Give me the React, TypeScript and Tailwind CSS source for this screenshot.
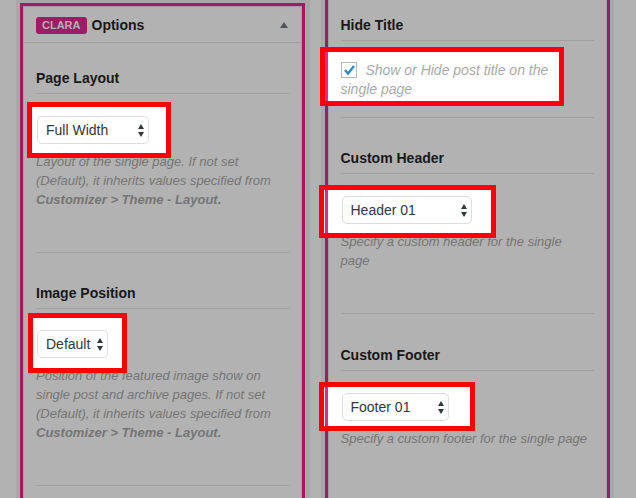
import type { ReactNode } from "react";

function Highlight({ box, strip }: { box: string; strip?: string }) {
  return (
    <span aria-hidden="true" className={`pointer-events-none absolute z-10 border-5 border-[#ff0000] bg-white ${box}`}>
      {strip && <span className={`absolute inset-y-0 bg-[#e62790] ${strip}`} />}
    </span>
  );
}

function Choice({ id, value, width }: { id: string; value: string; width: string }) {
  return (
    <div className={`relative z-20 ml-px h-7 ${width}`}>
      <select
        id={id}
        defaultValue={value}
        className="block h-7 w-full appearance-none rounded-[5px] border border-[#dddddd] bg-white pl-2 text-[14px] leading-[18px] text-[#32373c]"
      >
        <option>{value}</option>
      </select>
      <svg viewBox="0 0 6 13" className="pointer-events-none absolute top-2 right-[5px] h-[13px] w-[6px]" fill="#32373c">
        <path d="M0 5 3 0l3 5zM0 8h6l-3 5z" />
      </svg>
    </div>
  );
}

function Heading({ id, children }: { id?: string; children: ReactNode }) {
  return (
    <h3 className="border-b border-[#a0a0a0] pb-1.5 text-[14px] leading-[18px] font-bold text-[#181818]">
      {id ? <label htmlFor={id}>{children}</label> : children}
    </h3>
  );
}

function Help({ children }: { children: ReactNode }) {
  return <p className="text-[13px] leading-[19px] text-[#757575] italic">{children}</p>;
}

export default function App() {
  return (
    <main className="grid h-screen grid-cols-2 gap-[11px] overflow-hidden bg-[#b2b2b2] pr-[22px] pl-4 font-['Liberation_Sans',Arial,sans-serif]">
      <div className="min-w-0 bg-[#a8a8a8] pt-[3px] pr-[5px] pl-1">
        <section className="h-full border-3 border-b-0 border-[#a01b65] bg-[#b2b2b2]">
          <div className="h-full border border-b-0 border-[#a0a0a0]">
            <h2 className="flex h-9 items-center border-b border-[#a0a0a0] pt-px pr-[13px] pl-3 text-[14px] font-bold text-[#181818]">
              <span className="mr-[5px] rounded-[3px] bg-[#a01b65] px-1.5 text-[11px] leading-[17px] text-[#b2b2b2]">CLARA</span>
              Options
              <button aria-label="Toggle options" className="ml-auto">
                <svg viewBox="0 0 8 6" className="h-[6px] w-2" fill="#505356"><path d="M0 6 4 0l4 6z" /></svg>
              </button>
            </h2>
            <div className="px-3 pt-[26px]">
              <div className="h-[183px]">
                <Heading id="layout">Page Layout</Heading>
                <div className="relative pt-[22px] pb-2">
                  <Highlight box="top-2 -left-[9px] h-14 w-36" />
                  <Choice id="layout" value="Full Width" width="w-28" />
                </div>
                <Help>Layout of the single page. If not set (Default), it inherits values specified from <b>Customizer &gt; Theme - Layout.</b></Help>
              </div>
              <div className="border-t border-[#a0a0a0] pt-[31px]">
                <Heading id="position">Image Position</Heading>
                <div className="relative pt-[21px] pb-2">
                  <Highlight box="top-1 -left-2 h-[60px] w-[99px]" />
                  <Choice id="position" value="Default" width="w-[71px]" />
                </div>
                <Help>Position of the featured image show on single post and archive pages. If not set (Default), it inherits values specified from <b>Customizer &gt; Theme - Layout.</b></Help>
                <hr className="mt-[43px] border-[#a0a0a0]" />
              </div>
            </div>
          </div>
        </section>
      </div>
      <div className="min-w-0 bg-[#a8a8a8] px-1">
        <section className="h-full border-x-3 border-[#a01b65] bg-[#b2b2b2]">
          <div className="h-full border-x border-[#a0a0a0] px-3 pt-4">
            <div className="h-[101px]">
              <Heading>Hide Title</Heading>
              <div className="relative pt-5">
                <Highlight box="top-1.5 -left-[21px] h-[59px] w-[244px]" strip="left-0 w-[3px]" />
                <label className="relative z-20 block pr-9 text-[14px] leading-[19px] text-[#aaaaaa] italic">
                  <span className="relative mr-[5px] inline-block size-4 align-[-3px]">
                    <input type="checkbox" defaultChecked className="block size-4 appearance-none border border-[#b4b9be] bg-white" />
                    <svg viewBox="0 0 16 16" className="pointer-events-none absolute inset-0 size-4" fill="none" stroke="#318ac7" strokeWidth="2.4"><path d="m4 8 3 3.5 6-7.5" /></svg>
                  </span>{" "}
                  Show or Hide post title on the single page
                </label>
              </div>
            </div>
            <div className="border-t border-[#a0a0a0] pt-[31px]">
              <Heading id="header">Custom Header</Heading>
              <div className="relative pt-[22px] pb-2">
                <Highlight box="top-[11px] -left-[22px] h-[53px] w-[177px]" strip="left-px w-[3px]" />
                <Choice id="header" value="Header 01" width="w-[130px]" />
              </div>
              <div className="pr-4">
                <Help>Specify a custom header for the single page</Help>
              </div>
            </div>
            <div className="mt-[43px] border-t border-[#a0a0a0] pt-8">
              <Heading id="footer">Custom Footer</Heading>
              <div className="relative pt-[22px] pb-2">
                <Highlight box="top-[11px] -left-[22px] h-[49px] w-[156px]" strip="left-px w-[3px]" />
                <Choice id="footer" value="Footer 01" width="w-[107px]" />
              </div>
              <Help>Specify a custom footer for the single page</Help>
            </div>
          </div>
        </section>
      </div>
    </main>
  );
}
